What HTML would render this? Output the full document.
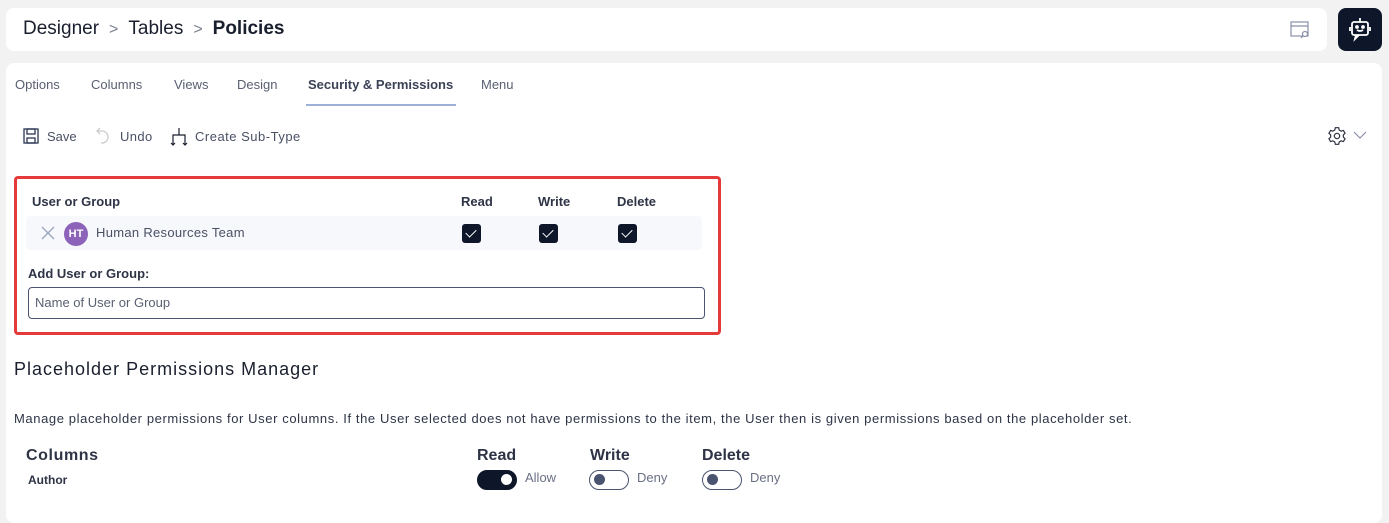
<!DOCTYPE html>
<html><head><style>
*{box-sizing:border-box;margin:0;padding:0}
body{width:1389px;height:511px;background:#f2f2f2;font-family:"Liberation Sans",sans-serif;color:#3b4256;position:relative;overflow:hidden}
.hdr{position:absolute;left:6px;top:8px;width:1321px;height:43px;background:#fff;border-radius:8px}
.bc{position:absolute;left:17px;top:10px;font-size:19px;color:#1a1f2e}
.bc .sep{color:#7a8090;margin:0 10px;font-size:16px}
.bot{position:absolute;left:1338px;top:8px;width:44px;height:43px;background:#0e1629;border-radius:8px}
.main{position:absolute;left:6px;top:63px;width:1376px;height:460px;background:#fff;border-radius:8px}
.tab{position:absolute;top:14px;font-size:13px;color:#5a6072}
.t{position:absolute;font-size:13px;color:#4a5064}
.b{font-weight:bold;color:#2e3446}
.redbox{position:absolute;left:8px;top:113px;width:707px;height:159px;border:3px solid #e53a3a;border-radius:4px}
.cb{position:absolute;width:19px;height:19px;background:#0e1629;border-radius:3px}
.cb:after{content:"";position:absolute;left:6px;top:3px;width:5px;height:9px;border:solid #fff;border-width:0 1.5px 1.5px 0;transform:rotate(45deg)}
.tg{position:absolute;width:40px;height:20px;border-radius:10px;border:1.5px solid #4a5370}
.tg i{position:absolute;top:3px;width:11px;height:11px;border-radius:50%}
</style></head><body>
<div class="hdr"><div class="bc">Designer<span class="sep">&gt;</span>Tables<span class="sep">&gt;</span><b>Policies</b></div>
<svg style="position:absolute;left:1284px;top:13px" width="20" height="18" viewBox="0 0 20 18" fill="none" stroke="#8a8fa8" stroke-width="1.2"><rect x="1" y="1" width="17" height="14"/><line x1="1" y1="5" x2="18" y2="5"/><circle cx="15" cy="13" r="2.5" fill="#fff"/><line x1="13" y1="15" x2="11" y2="17"/></svg>
</div>
<div class="bot"><svg style="position:absolute;left:10px;top:9px" width="24" height="26" viewBox="0 0 24 26" fill="none" stroke="#fff" stroke-width="1.8"><line x1="12" y1="1" x2="12" y2="5"/><rect x="4" y="5" width="16" height="13" rx="2"/><line x1="2" y1="10" x2="2" y2="14"/><line x1="22" y1="10" x2="22" y2="14"/><circle cx="9" cy="10" r="1" fill="#fff"/><circle cx="15" cy="10" r="1" fill="#fff"/><path d="M9 13q3 2 6 0"/><path d="M8 18l-1 4 4-4"/></svg></div>
<div class="main">
<div class="tab" style="left:9px">Options</div>
<div class="tab" style="left:85px">Columns</div>
<div class="tab" style="left:168px">Views</div>
<div class="tab" style="left:231px">Design</div>
<div class="tab b" style="left:302px;color:#3b4256">Security &amp; Permissions</div>
<div style="position:absolute;left:300px;top:41px;width:150px;height:2px;background:#9fb0d8"></div>
<div class="tab" style="left:475px">Menu</div>
<svg style="position:absolute;left:17px;top:65px" width="16" height="16" viewBox="0 0 16 16" fill="none" stroke="#2a3550" stroke-width="1.3"><rect x="1" y="1" width="14" height="14"/><rect x="4" y="1" width="8" height="5"/><rect x="4" y="10" width="8" height="5"/></svg>
<div class="t" style="left:41px;top:66px">Save</div>
<svg style="position:absolute;left:90px;top:64px" width="14" height="18" viewBox="0 0 14 18" fill="none" stroke="#ccc" stroke-width="1.3"><path d="M4 1L1 4l3 3"/><path d="M1 4h5a6 6 0 0 1 0 12H5"/></svg>
<div class="t" style="left:114px;top:66px;letter-spacing:.4px">Undo</div>
<svg style="position:absolute;left:164px;top:64px" width="18" height="20" viewBox="0 0 18 20" fill="none" stroke="#1a1f2e" stroke-width="1.2"><line x1="9" y1="1" x2="9" y2="8"/><path d="M3 18V8h12v10"/><path d="M1 16l2 2 2-2M13 16l2 2 2-2"/></svg>
<div class="t" style="left:189px;top:66px;letter-spacing:.5px">Create Sub-Type</div>
<svg style="position:absolute;left:1321px;top:63px" width="20" height="20" viewBox="0 0 24 24" fill="none" stroke="#2a2f3e" stroke-width="1.4"><circle cx="12" cy="12" r="3.2"/><path d="M10 2h4l.6 2.8 2.4 1.4 2.7-.9 2 3.4-2.1 1.9v2.8l2.1 1.9-2 3.4-2.7-.9-2.4 1.4L14 22h-4l-.6-2.8-2.4-1.4-2.7.9-2-3.4 2.1-1.9v-2.8L2.3 8.7l2-3.4 2.7.9 2.4-1.4z"/></svg>
<svg style="position:absolute;left:1347px;top:68px" width="14" height="9" viewBox="0 0 14 9" fill="none" stroke="#8a8fa8" stroke-width="1.2"><path d="M1 1l6 6 6-6"/></svg>
<div class="redbox"></div>
<div class="t b" style="left:26px;top:131px">User or Group</div>
<div class="t b" style="left:455px;top:131px">Read</div>
<div class="t b" style="left:532px;top:131px">Write</div>
<div class="t b" style="left:611px;top:131px">Delete</div>
<div style="position:absolute;left:20px;top:153px;width:676px;height:34px;background:#f7f8fc;border-radius:4px"></div>
<svg style="position:absolute;left:35px;top:163px" width="14" height="14" viewBox="0 0 14 14" stroke="#9aa3c0" stroke-width="1.3"><path d="M1 1l12 12M13 1L1 13"/></svg>
<div style="position:absolute;left:58px;top:159px;width:24px;height:24px;border-radius:50%;background:#8c63b8;color:#fff;font-size:11px;font-weight:bold;text-align:center;line-height:24px">HT</div>
<div class="t" style="left:90px;top:162px;letter-spacing:.3px">Human Resources Team</div>
<div class="cb" style="left:456px;top:161px"></div>
<div class="cb" style="left:533px;top:161px"></div>
<div class="cb" style="left:612px;top:161px"></div>
<div class="t b" style="left:22px;top:203px">Add User or Group:</div>
<div style="position:absolute;left:22px;top:224px;width:677px;height:32px;border:1px solid #4a5370;border-radius:4px"></div>
<div class="t" style="left:29px;top:232px;color:#5a6072">Name of User or Group</div>
<div style="position:absolute;left:8px;top:296px;font-size:18px;color:#1a1f2e;letter-spacing:1px">Placeholder Permissions Manager</div>
<div class="t" style="left:8px;top:348px;color:#2e3446;letter-spacing:.6px">Manage placeholder permissions for User columns. If the User selected does not have permissions to the item, the User then is given permissions based on the placeholder set.</div>
<div class="t b" style="left:20px;top:384px;font-size:16px;letter-spacing:.6px">Columns</div>
<div class="t b" style="left:471px;top:384px;font-size:16px">Read</div>
<div class="t b" style="left:584px;top:384px;font-size:16px">Write</div>
<div class="t b" style="left:696px;top:384px;font-size:16px">Delete</div>
<div class="t b" style="left:22px;top:410px;font-size:12px">Author</div>
<div class="tg" style="left:471px;top:407px;background:#0e1629;border-color:#0e1629"><i style="left:23px;background:#fff"></i></div>
<div class="t" style="left:519px;top:407px;color:#6a7084">Allow</div>
<div class="tg" style="left:583px;top:407px"><i style="left:4px;background:#4a5370"></i></div>
<div class="t" style="left:631px;top:407px;color:#6a7084">Deny</div>
<div class="tg" style="left:696px;top:407px"><i style="left:4px;background:#4a5370"></i></div>
<div class="t" style="left:744px;top:407px;color:#6a7084">Deny</div>
</div>
</body></html>
